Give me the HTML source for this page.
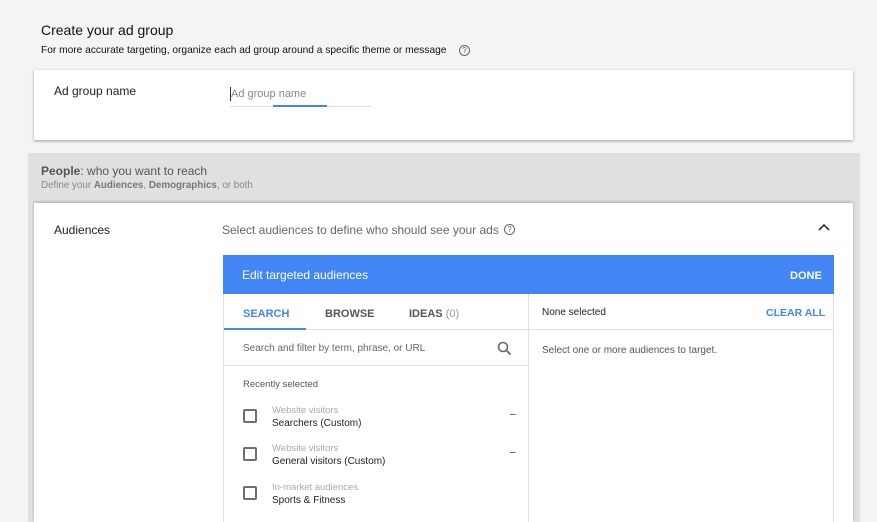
<!DOCTYPE html>
<html><head><style>
*{margin:0;padding:0;box-sizing:border-box}
html,body{width:877px;height:522px;overflow:hidden}
body{background:#f4f4f4;font-family:"Liberation Sans",Arial,sans-serif;position:relative;color:#212121}
.a{position:absolute;white-space:nowrap}
.cb{position:absolute;width:14px;height:14px;border:2px solid #6f6f6f;border-radius:2px;left:243px}
</style></head><body>
<div class="a" style="left:41px;top:22px;font-size:14px;color:#111">Create your ad group</div>
<div class="a" style="left:41px;top:45px;font-size:10.2px;color:#111">For more accurate targeting, organize each ad group around a specific theme or message</div>
<div class="a" style="left:459px;top:45px;width:11px;height:11px;border:1px solid #666;border-radius:50%;font-size:8px;text-align:center;line-height:9px;color:#666">?</div>
<div class="a" style="left:34px;top:70px;width:819px;height:70px;background:#fff;box-shadow:0 1px 3px rgba(0,0,0,.35)"></div>
<div class="a" style="left:54px;top:84px;font-size:12px">Ad group name</div>
<div class="a" style="left:230px;top:87px;width:1px;height:14px;background:#333"></div>
<div class="a" style="left:231px;top:88px;font-size:11px;color:#888">Ad group name</div>
<div class="a" style="left:230px;top:106px;width:141px;height:1px;background:#ddd"></div>
<div class="a" style="left:273px;top:105px;width:54px;height:2px;background:#4285f4"></div>
<div class="a" style="left:28px;top:153px;width:832px;height:369px;background:#e0e0e0"></div>
<div class="a" style="left:41px;top:164px;font-size:12px;color:#555"><b>People</b>: who you want to reach</div>
<div class="a" style="left:41px;top:180px;font-size:9.8px;color:#888">Define your <b style="color:#777">Audiences</b>, <b style="color:#777">Demographics</b>, or both</div>
<div class="a" style="left:34px;top:203px;width:819px;height:319px;background:#fff;box-shadow:0 -1px 3px rgba(0,0,0,.25)"></div>
<div class="a" style="left:54px;top:223px;font-size:12px">Audiences</div>
<div class="a" style="left:222px;top:223px;font-size:12px;color:#666">Select audiences to define who should see your ads</div>
<div class="a" style="left:504px;top:224px;width:11px;height:11px;border:1px solid #666;border-radius:50%;font-size:8px;text-align:center;line-height:9px;color:#666">?</div>
<svg class="a" style="left:818px;top:223px" width="12" height="10"><path d="M1 7 L6 2 L11 7" stroke="#333" stroke-width="1.6" fill="none"/></svg>
<div class="a" style="left:223px;top:255px;width:611px;height:39px;background:#4285f4"></div>
<div class="a" style="left:242px;top:268px;font-size:12px;color:#fff">Edit targeted audiences</div>
<div class="a" style="left:790px;top:270px;font-size:11px;color:#fff;font-weight:bold">DONE</div>
<div class="a" style="left:223px;top:294px;width:1px;height:228px;background:#e0e0e0"></div>
<div class="a" style="left:833px;top:294px;width:1px;height:228px;background:#e0e0e0"></div>
<div class="a" style="left:528px;top:294px;width:1px;height:228px;background:#e0e0e0"></div>
<div class="a" style="left:224px;top:329px;width:304px;height:1px;background:#e0e0e0"></div>
<div class="a" style="left:224px;top:328px;width:82px;height:2px;background:#4285f4"></div>
<div class="a" style="left:529px;top:329px;width:305px;height:1px;background:#e0e0e0"></div>
<div class="a" style="left:224px;top:365px;width:304px;height:1px;background:#e0e0e0"></div>
<div class="a" style="left:243px;top:308px;font-size:11px;color:#4285f4;font-weight:bold">SEARCH</div>
<div class="a" style="left:325px;top:308px;font-size:11px;color:#555;font-weight:bold">BROWSE</div>
<div class="a" style="left:409px;top:308px;font-size:11px;color:#555;font-weight:bold">IDEAS <span style="font-weight:normal;color:#999">(0)</span></div>
<div class="a" style="left:243px;top:343px;font-size:10px;color:#666">Search and filter by term, phrase, or URL</div>
<svg class="a" style="left:497px;top:341px" width="15" height="15"><circle cx="6" cy="6" r="4.5" stroke="#666" stroke-width="1.6" fill="none"/><path d="M9.5 9.5 L13.5 13.5" stroke="#666" stroke-width="1.8"/></svg>
<div class="a" style="left:243px;top:379px;font-size:9.5px;color:#555">Recently selected</div>
<div class="cb" style="top:409px"></div>
<div class="a" style="left:272px;top:405px;font-size:9.5px;color:#aaa">Website visitors</div>
<div class="a" style="left:272px;top:418px;font-size:10px;color:#222">Searchers (Custom)</div>
<div class="a" style="left:510px;top:409px;font-size:10px">–</div>
<div class="cb" style="top:447px"></div>
<div class="a" style="left:272px;top:443px;font-size:9.5px;color:#aaa">Website visitors</div>
<div class="a" style="left:272px;top:456px;font-size:10px;color:#222">General visitors (Custom)</div>
<div class="a" style="left:510px;top:447px;font-size:10px">–</div>
<div class="cb" style="top:486px"></div>
<div class="a" style="left:272px;top:482px;font-size:9.5px;color:#aaa">In-market audiences</div>
<div class="a" style="left:272px;top:495px;font-size:10px;color:#222">Sports &amp; Fitness</div>
<div class="a" style="left:542px;top:307px;font-size:10px;color:#222">None selected</div>
<div class="a" style="left:766px;top:307px;font-size:10.5px;color:#4285f4;font-weight:bold">CLEAR ALL</div>
<div class="a" style="left:542px;top:345px;font-size:10px;color:#555">Select one or more audiences to target.</div>
</body></html>
